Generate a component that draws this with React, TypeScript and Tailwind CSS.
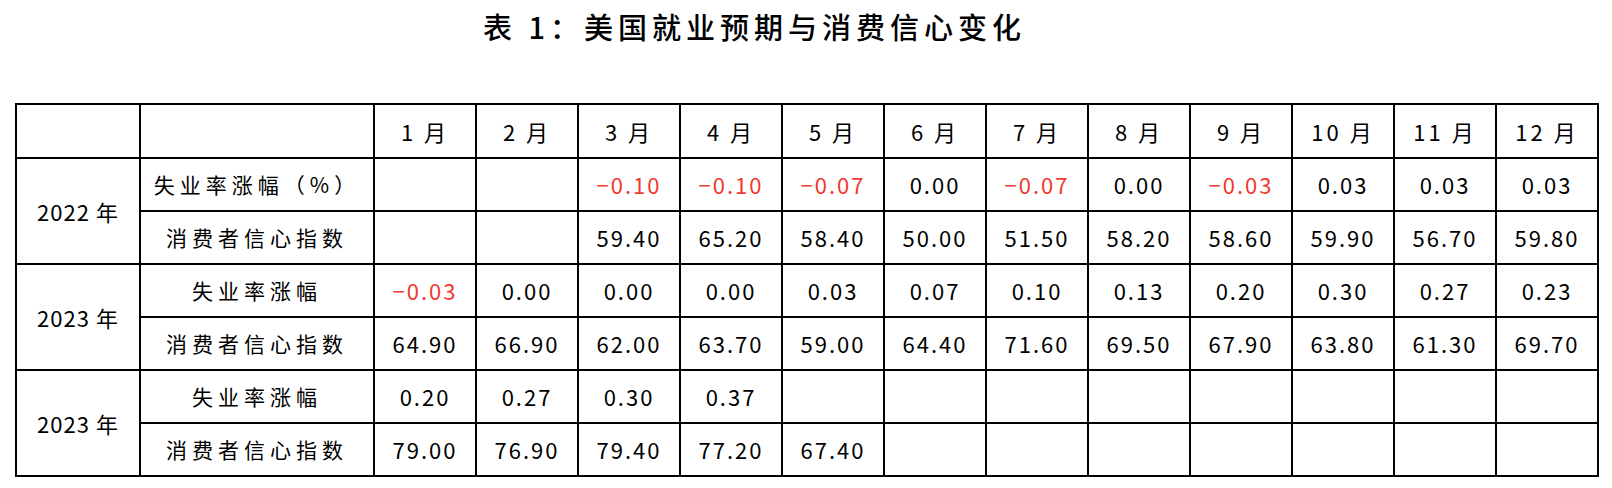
const months = ["1 月", "2 月", "3 月", "4 月", "5 月", "6 月", "7 月", "8 月", "9 月", "10 月", "11 月", "12 月"];

type Group = {
  year: string;
  rows: { label: string; values: string[] }[];
};

const groups: Group[] = [
  {
    year: "2022 年",
    rows: [
      {
        label: "失业率涨幅（%）",
        values: ["", "", "−0.10", "−0.10", "−0.07", "0.00", "−0.07", "0.00", "−0.03", "0.03", "0.03", "0.03"],
      },
      {
        label: "消费者信心指数",
        values: ["", "", "59.40", "65.20", "58.40", "50.00", "51.50", "58.20", "58.60", "59.90", "56.70", "59.80"],
      },
    ],
  },
  {
    year: "2023 年",
    rows: [
      {
        label: "失业率涨幅",
        values: ["−0.03", "0.00", "0.00", "0.00", "0.03", "0.07", "0.10", "0.13", "0.20", "0.30", "0.27", "0.23"],
      },
      {
        label: "消费者信心指数",
        values: ["64.90", "66.90", "62.00", "63.70", "59.00", "64.40", "71.60", "69.50", "67.90", "63.80", "61.30", "69.70"],
      },
    ],
  },
  {
    year: "2023 年",
    rows: [
      {
        label: "失业率涨幅",
        values: ["0.20", "0.27", "0.30", "0.37", "", "", "", "", "", "", "", ""],
      },
      {
        label: "消费者信心指数",
        values: ["79.00", "76.90", "79.40", "77.20", "67.40", "", "", "", "", "", "", ""],
      },
    ],
  },
];

const cell = "border-2 border-black text-center align-middle p-0";

export default function App() {
  return (
    <div
      className="w-[1612px] h-[488px] bg-white text-black overflow-hidden"
      style={{ fontFamily: '"Noto Sans CJK SC", "Noto Sans", sans-serif' }}
    >
      {/* Title */}
      <h1 className="ml-[483px] pt-[12px] text-[29px] leading-[29px] font-medium tracking-[5px] whitespace-nowrap">
        表 1：美国就业预期与消费信心变化
      </h1>

      {/* Table */}
      <table className="ml-[15px] mt-[62px] w-[1582px] table-fixed border-collapse text-[21px]">
        <colgroup>
          <col className="w-[124px]" />
          <col className="w-[234px]" />
          {months.map((m) => (
            <col key={m} className="w-[102px]" />
          ))}
        </colgroup>
        <thead>
          <tr className="h-[54px]">
            <th className={cell}></th>
            <th className={cell}></th>
            {months.map((m) => (
              <th key={m} className={`${cell} font-normal text-[22px] tracking-[3px]`}>
                {m}
              </th>
            ))}
          </tr>
        </thead>
        <tbody>
          {groups.map((g, gi) =>
            g.rows.map((r, ri) => (
              <tr key={`${gi}-${ri}`} className="h-[53px]">
                {ri === 0 && (
                  <td rowSpan={2} className={`${cell} text-[22px] tracking-[1px]`}>
                    {g.year}
                  </td>
                )}
                <td className={`${cell} tracking-[5px]`}>{r.label}</td>
                {r.values.map((v, vi) => (
                  <td
                    key={vi}
                    className={`${cell} text-[22px] tracking-[2px] ${v.startsWith("−") ? "text-[#f03a2e]" : ""}`}
                  >
                    {v}
                  </td>
                ))}
              </tr>
            ))
          )}
        </tbody>
      </table>
    </div>
  );
}
